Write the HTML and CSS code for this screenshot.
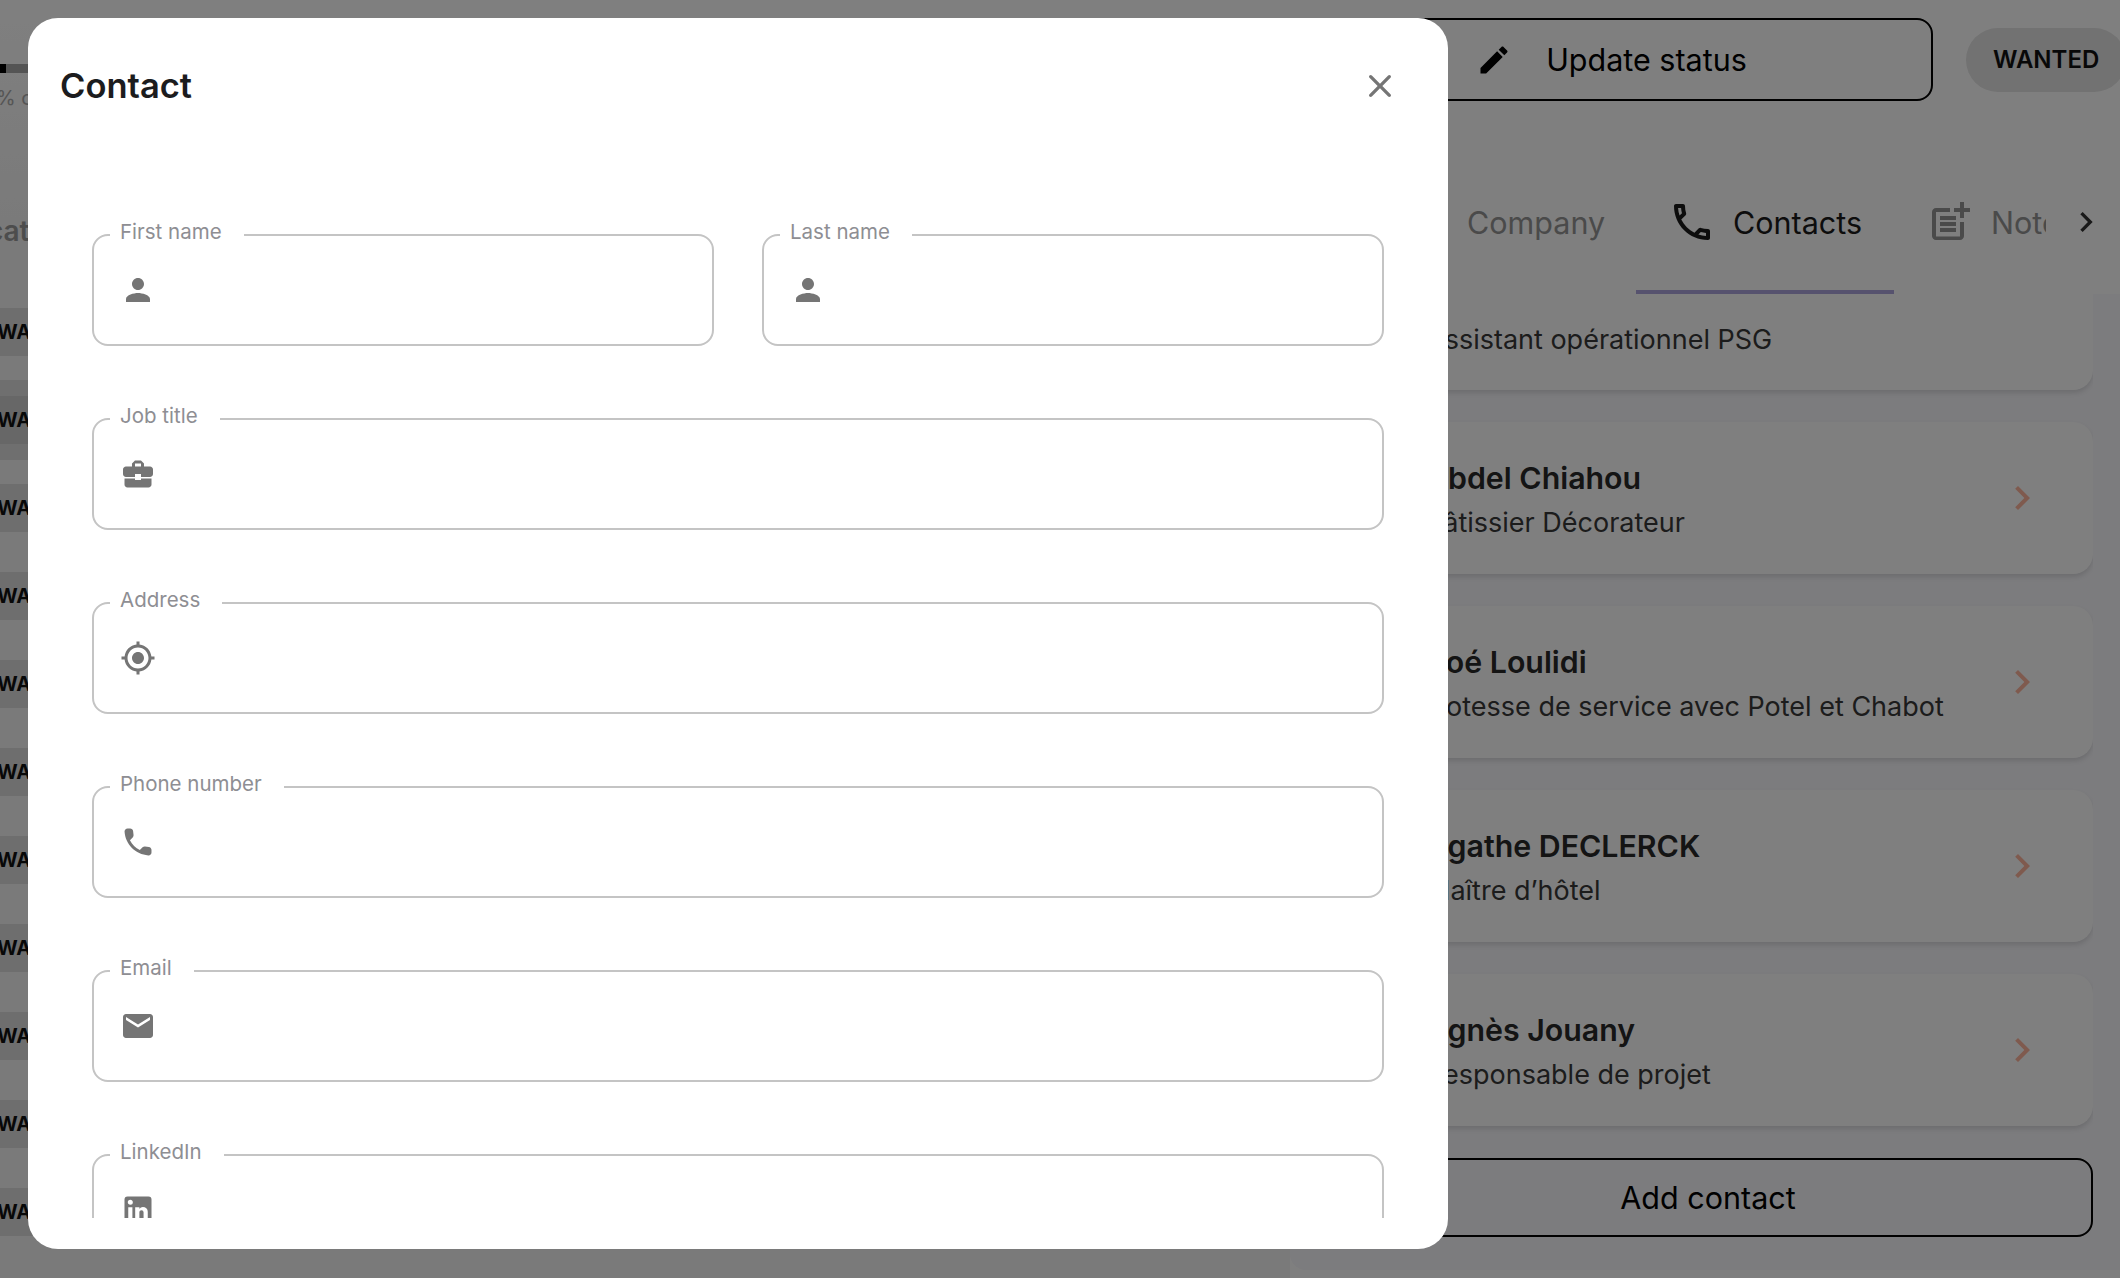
FILE: index.html
```html
<!DOCTYPE html>
<html lang="en">
<head>
<meta charset="utf-8">
<title>Contact</title>
<link rel="stylesheet" href="styles.css">
</head>
<body>
<div class="page">
  <section class="left">
    <div class="progress"><div class="progress-fill"></div></div>
    <p class="progress-text">% complete</p>
    <h2 class="left-title">Location</h2>
    <div class="rows">
      <div class="row"><span class="chip">WANTED</span></div>
      <div class="row row-active"><span class="chip">WANTED</span></div>
      <div class="row"><span class="chip">WANTED</span></div>
      <div class="row"><span class="chip">WANTED</span></div>
      <div class="row"><span class="chip">WANTED</span></div>
      <div class="row"><span class="chip">WANTED</span></div>
      <div class="row"><span class="chip">WANTED</span></div>
      <div class="row"><span class="chip">WANTED</span></div>
      <div class="row"><span class="chip">WANTED</span></div>
      <div class="row"><span class="chip">WANTED</span></div>
      <div class="row"><span class="chip">WANTED</span></div>
    </div>
  </section>

  <section class="panel">
    <div class="topbar">
      <button class="status-btn">
        <svg class="icon-36" viewBox="0 0 24 24"><path d="M3 17.25V21h3.75L17.81 9.94l-3.75-3.75L3 17.25zM20.71 7.04c.39-.39.39-1.02 0-1.41l-2.34-2.34c-.39-.39-1.02-.39-1.41 0l-1.83 1.83 3.75 3.75 1.83-1.83z"/></svg>
        <span>Update status</span>
      </button>
      <span class="status-chip">WANTED</span>
    </div>
    <div class="tabs">
      <div class="tabs-clip">
        <div class="tab tab-company">
          <svg class="icon-48" viewBox="0 0 24 24"><path d="M12 7V3H2v18h20V7H12z"/></svg>
          <span>Company</span>
        </div>
        <div class="tab tab-active">
          <svg class="icon-48" viewBox="0 0 24 24"><path d="M6.54 5c.06.89.21 1.76.45 2.59l-1.2 1.2c-.41-1.2-.67-2.47-.76-3.79h1.51m9.86 12.02c.85.24 1.72.39 2.6.45v1.49c-1.32-.09-2.59-.35-3.8-.75l1.2-1.19M7.5 3H4c-.55 0-1 .45-1 1 0 9.39 7.61 17 17 17 .55 0 1-.45 1-1v-3.49c0-.55-.45-1-1-1-1.24 0-2.45-.2-3.57-.57-.1-.04-.21-.05-.31-.05-.26 0-.51.1-.71.29l-2.2 2.2c-2.83-1.45-5.15-3.76-6.59-6.59l2.2-2.2c.28-.28.36-.67.25-1.02C8.7 6.45 8.5 5.25 8.5 4c0-.55-.45-1-1-1z"/></svg>
          <span>Contacts</span>
        </div>
        <div class="tab tab-notes">
          <svg class="icon-48" viewBox="0 0 24 24"><path d="M17 19.22H5V7h7V5H5c-1.1 0-2 .9-2 2v12c0 1.1.9 2 2 2h12c1.1 0 2-.9 2-2v-7h-2v7.22z"/><path d="M19 2h-2v3h-3c.01.01 0 2 0 2h3v2.99c.01.01 2 0 2 0V7h3V5h-3V2z"/><path d="M7 9h8v2H7zM7 12v2h8v-2H7zM7 15h8v2H7z"/></svg>
          <span>Notes</span>
        </div>
      </div>
      <svg class="tab-arrow" viewBox="0 0 24 24"><path d="M10 6 8.59 7.41 13.17 12l-4.58 4.59L10 18l6-6z"/></svg>
    </div>
    <div class="list-area">
      <div class="cards">
        <article class="card card-scrolled">
          <div class="card-text"><p class="card-role">Assistant opérationnel PSG</p></div>
        </article>
        <article class="card">
          <div class="card-text"><h3 class="card-name">Abdel Chiahou</h3><p class="card-role">Pâtissier Décorateur</p></div>
          <svg class="card-arrow" viewBox="0 0 24 24"><path d="M10 6 8.59 7.41 13.17 12l-4.58 4.59L10 18l6-6z"/></svg>
        </article>
        <article class="card">
          <div class="card-text"><h3 class="card-name">Zoé Loulidi</h3><p class="card-role">Hotesse de service avec Potel et Chabot</p></div>
          <svg class="card-arrow" viewBox="0 0 24 24"><path d="M10 6 8.59 7.41 13.17 12l-4.58 4.59L10 18l6-6z"/></svg>
        </article>
        <article class="card">
          <div class="card-text"><h3 class="card-name">Agathe DECLERCK</h3><p class="card-role">Maître d’hôtel</p></div>
          <svg class="card-arrow" viewBox="0 0 24 24"><path d="M10 6 8.59 7.41 13.17 12l-4.58 4.59L10 18l6-6z"/></svg>
        </article>
        <article class="card">
          <div class="card-text"><h3 class="card-name">Agnès Jouany</h3><p class="card-role">Responsable de projet</p></div>
          <svg class="card-arrow" viewBox="0 0 24 24"><path d="M10 6 8.59 7.41 13.17 12l-4.58 4.59L10 18l6-6z"/></svg>
        </article>
      </div>
      <button class="add-btn">Add contact</button>
    </div>
  </section>

  <div class="backdrop"></div>

  <div class="modal">
    <header class="modal-head">
      <h1 class="modal-title">Contact</h1>
      <svg class="modal-close" viewBox="0 0 24 24"><path d="M18.3 5.71a.9959.9959 0 0 0-1.41 0L12 10.59 7.11 5.7a.9959.9959 0 0 0-1.41 0c-.39.39-.39 1.02 0 1.41L10.59 12 5.7 16.89c-.39.39-.39 1.02 0 1.41.39.39 1.02.39 1.41 0L12 13.41l4.89 4.89c.39.39 1.02.39 1.41 0 .39-.39.39-1.02 0-1.41L13.41 12l4.89-4.89c.38-.38.38-1.02 0-1.4z"/></svg>
    </header>
    <form class="modal-body">
      <div class="field-pair">
        <fieldset class="field">
          <legend class="field-label">First name</legend>
          <div class="field-body">
            <svg class="field-icon" viewBox="0 0 24 24"><path d="M12 12c2.21 0 4-1.79 4-4s-1.79-4-4-4-4 1.79-4 4 1.79 4 4 4zm0 2c-2.67 0-8 1.34-8 4v2h16v-2c0-2.66-5.33-4-8-4z"/></svg>
            <input class="field-input" type="text">
          </div>
        </fieldset>
        <fieldset class="field">
          <legend class="field-label">Last name</legend>
          <div class="field-body">
            <svg class="field-icon" viewBox="0 0 24 24"><path d="M12 12c2.21 0 4-1.79 4-4s-1.79-4-4-4-4 1.79-4 4 1.79 4 4 4zm0 2c-2.67 0-8 1.34-8 4v2h16v-2c0-2.66-5.33-4-8-4z"/></svg>
            <input class="field-input" type="text">
          </div>
        </fieldset>
      </div>
      <fieldset class="field">
        <legend class="field-label">Job title</legend>
        <div class="field-body">
          <svg class="field-icon" viewBox="0 0 24 24"><path d="M10 16v-1H3.01L3 19c0 1.11.89 2 2 2h14c1.11 0 2-.89 2-2v-4h-7v1h-4zm10-9h-4.01V5l-2-2h-4l-2 2v2H4c-1.1 0-2 .9-2 2v3c0 1.11.89 2 2 2h6v-2h4v2h6c1.1 0 2-.9 2-2V9c0-1.1-.9-2-2-2zm-6 0h-4V5h4v2z"/></svg>
          <input class="field-input" type="text">
        </div>
      </fieldset>
      <fieldset class="field">
        <legend class="field-label">Address</legend>
        <div class="field-body">
          <svg class="field-icon" viewBox="0 0 24 24"><path d="M12 8c-2.21 0-4 1.79-4 4s1.79 4 4 4 4-1.79 4-4-1.79-4-4-4zm8.94 3c-.46-4.17-3.77-7.48-7.94-7.94V1h-2v2.06C6.83 3.52 3.52 6.83 3.06 11H1v2h2.06c.46 4.17 3.77 7.48 7.94 7.94V23h2v-2.06c4.17-.46 7.48-3.77 7.94-7.94H23v-2h-2.06zM12 19c-3.87 0-7-3.13-7-7s3.13-7 7-7 7 3.13 7 7-3.13 7-7 7z"/></svg>
          <input class="field-input" type="text">
        </div>
      </fieldset>
      <fieldset class="field">
        <legend class="field-label">Phone number</legend>
        <div class="field-body">
          <svg class="field-icon" viewBox="0 0 24 24"><path d="M19.23 15.26l-2.54-.29c-.61-.07-1.21.14-1.64.57l-1.84 1.84c-2.83-1.44-5.15-3.75-6.59-6.59l1.85-1.85c.43-.43.64-1.03.57-1.64l-.29-2.52c-.12-1.01-.97-1.77-1.99-1.77H5.03c-1.13 0-2.07.94-2 2.07.53 8.54 7.36 15.36 15.89 15.89 1.13.07 2.07-.87 2.07-2v-1.73c.01-1.01-.75-1.86-1.76-1.98z"/></svg>
          <input class="field-input" type="text">
        </div>
      </fieldset>
      <fieldset class="field">
        <legend class="field-label">Email</legend>
        <div class="field-body">
          <svg class="field-icon" viewBox="0 0 24 24"><path d="M20 4H4c-1.1 0-1.99.9-1.99 2L2 18c0 1.1.9 2 2 2h16c1.1 0 2-.9 2-2V6c0-1.1-.9-2-2-2zm0 4l-8 5-8-5V6l8 5 8-5v2z"/></svg>
          <input class="field-input" type="text">
        </div>
      </fieldset>
      <fieldset class="field">
        <legend class="field-label">LinkedIn</legend>
        <div class="field-body">
          <svg class="field-icon" viewBox="0 0 24 24"><path d="M19 3a2 2 0 0 1 2 2v14a2 2 0 0 1-2 2H5a2 2 0 0 1-2-2V5a2 2 0 0 1 2-2h14m-.5 15.5v-5.3a3.26 3.26 0 0 0-3.26-3.26c-.85 0-1.84.52-2.32 1.3v-1.11h-2.79v8.37h2.79v-4.93c0-.77.62-1.4 1.39-1.4a1.4 1.4 0 0 1 1.4 1.4v4.93h2.79M6.88 8.56a1.68 1.68 0 0 0 1.68-1.68c0-.93-.75-1.69-1.68-1.69a1.69 1.69 0 0 0-1.69 1.69c0 .93.76 1.68 1.69 1.68m1.39 9.94v-8.37H5.5v8.37h2.77z"/></svg>
          <input class="field-input" type="text">
        </div>
      </fieldset>
    </form>
  </div>
</div>
</body>
</html>
```

FILE: styles.css
```css
* { box-sizing: border-box; }
html, body { margin: 0; padding: 0; }
body { font-family: "Inter", "Liberation Sans", sans-serif; background: #fff; color: #1a1a1a; }
h1, h2, h3, p { margin: 0; }
svg { display: block; flex: none; fill: currentColor; }

.page { position: relative; width: 2120px; height: 1278px; overflow: hidden; display: flex; }

/* left column, almost entirely under the dialog */
.left { width: 1290px; flex: none; overflow: hidden; background: linear-gradient(#fff 0, #f4f4f4 240px); padding-top: 64px; }
.progress { height: 9px; background: #a8a8a8; }
.progress-fill { width: 6px; height: 100%; background: #000; }
.progress-text { margin: 13px 0 0 -4px; font-size: 20px; line-height: 24px; color: #aaa; }
.left-title { margin: 103px 0 0 -46px; font-size: 28px; line-height: 36px; font-weight: 600; color: #9a9a9a; }
.rows { margin-top: 39px; display: flex; flex-direction: column; }
.row { height: 88px; padding: 4px 0; display: flex; align-items: center; }
.row-active { background: #dedede; background-clip: content-box; }
.chip { height: 48px; padding: 0 20px 0 0; display: flex; align-items: center; border-radius: 0 16px 16px 0; background: #dcdcdc; font-size: 20px; font-weight: 700; color: #111; text-indent: -3px; }
.row-active .chip { background: #cfcfcf; }

/* right panel */
.panel { width: 830px; flex: none; display: flex; flex-direction: column; }
.topbar { display: flex; align-items: center; height: 83px; margin-top: 18px; margin-bottom: 49px; }
.status-btn { width: 643px; height: 83px; flex: none; display: flex; align-items: center; justify-content: center; gap: 34px; border: 2px solid #000; border-radius: 16px; background: none; color: #000; font: 400 30.5px "Inter", sans-serif; }
.status-chip { flex: none; margin-left: 33px; height: 64px; padding: 0 27px; display: flex; align-items: center; border-radius: 32px; background: #e4e4e4; font-size: 24px; font-weight: 600; color: #111; }
.icon-36 { width: 36px; height: 36px; }
.icon-48 { width: 48px; height: 48px; }

.tabs { display: flex; align-items: center; height: 144px; }
.tabs-clip { width: 756px; height: 144px; flex: none; display: flex; overflow: hidden; padding-left: 80px; }
.tab { flex: none; height: 144px; padding: 4px 0 0 32px; display: flex; align-items: center; gap: 17px; border-bottom: 4px solid transparent; font-size: 30.5px; font-weight: 400; color: #949494; }
.tab-company { width: 266px; }
.tab-active { width: 258px; color: #1a1a1a; border-bottom-color: #aca4dc; }
.tab-notes { width: 258px; }
.tab-arrow { width: 40px; height: 40px; margin-left: 20px; color: #333; }

.list-area { flex: 1; margin-bottom: 8px; padding: 0 27px 33px 33px; background: #f8f8fc; display: flex; flex-direction: column; border-bottom-left-radius: 16px; }
.cards { flex: 1; overflow: hidden; display: flex; flex-direction: column; gap: 32px; }
.card { flex: none; height: 152px; padding: 0 63px 0 103px; display: flex; justify-content: space-between; border-radius: 20px; background: #fff; box-shadow: 0 3px 5px rgba(0,0,0,.12); }
.card-scrolled { margin-top: -56px; }
.card-scrolled .card-text { padding-top: 76px; }
.card-text { padding-top: 37px; }
.card-name { font-size: 30.3px; line-height: 38px; font-weight: 600; color: #282828; }
.card-role { margin-top: 7px; font-size: 27px; line-height: 38px; color: #383838; }
.card-arrow { width: 48px; height: 48px; margin-top: 52px; margin-right: -16px; color: #ffb49c; }
.add-btn { flex: none; height: 79px; margin-top: 24px; border: 2px solid #000; border-radius: 16px; background: none; color: #000; font: 400 30.5px "Inter", sans-serif; }

/* dialog */
.backdrop { position: absolute; inset: 0; background: rgba(0,0,0,.5); }
.modal { position: absolute; left: 28px; top: 18px; width: 1420px; height: 1231px; padding-bottom: 31px; display: flex; flex-direction: column; border-radius: 30px; background: #fff; }
.modal-head { flex: none; height: 140px; padding: 48px 32px 0; display: flex; justify-content: space-between; align-items: flex-start; }
.modal-title { font-size: 34.5px; line-height: 40px; font-weight: 600; color: #1c1c1e; }
.modal-close { width: 40px; height: 40px; margin-right: 16px; color: #757575; }
.modal-body { flex: 1; min-height: 0; overflow: hidden; padding: 62px 64px 0; display: flex; flex-direction: column; gap: 58px; }
.field-pair { flex: none; display: grid; grid-template-columns: 1fr 1fr; gap: 48px; }
.field { flex: none; min-width: 0; margin: 0; padding: 0 26px 14px; border: 2px solid #c4c4c4; border-radius: 16px; }
.field-label { margin-left: -10px; padding: 0 22px 6px 10px; font-size: 20.5px; line-height: 24px; color: #8e8e93; }
.field-body { height: 80px; display: flex; align-items: center; gap: 20px; }
.field-icon { width: 36px; height: 36px; color: #757575; }
.field-input { flex: 1; min-width: 0; height: 48px; padding: 0; border: 0; outline: 0; background: none; font: 24px "Inter", sans-serif; }
```
